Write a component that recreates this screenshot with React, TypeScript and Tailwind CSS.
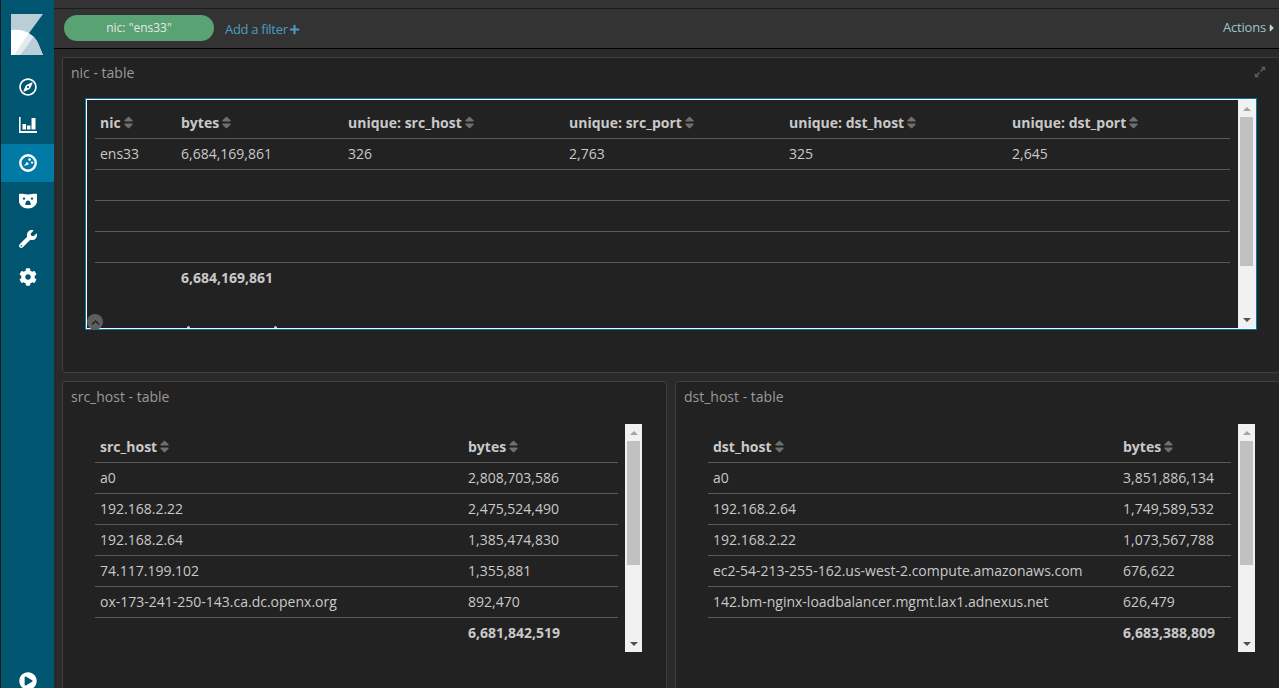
import React from "react";
import { FaRegCompass, FaWrench, FaCog, FaPlayCircle, FaPlus, FaCaretRight, FaSort, FaExpandAlt, FaChevronUp } from "react-icons/fa";

function Logo() {
  return (
    <svg width="32" height="41" viewBox="0 0 32 41" className="block">
      <polygon points="0,0 32,0 17,20.5 0,16" fill="#b9ced6" />
      <path d="M0,16 C10,15 20,17 26,28 L32,41 L0,41 Z" fill="#ffffff" />
      <path d="M9,41 L22.5,22.5 C24,24 26,26 28,31 L32,41 Z" fill="#b9ced6" />
      <path d="M3,41 L17.5,19.5 L22.5,22.5 L9,41 Z" fill="#e3ebee" />
    </svg>
  );
}

function BarIcon() {
  return (
    <svg width="18" height="16" viewBox="0 0 18 16">
      <path d="M0,0 H1.6 V14 H18 V16 H0 Z" fill="#fff" />
      <rect x="3.5" y="7" width="3.5" height="5.5" fill="#fff" />
      <rect x="8" y="8.5" width="3.5" height="4" fill="#fff" />
      <rect x="12.5" y="1" width="4" height="11.5" fill="#fff" />
    </svg>
  );
}

function DashIcon() {
  return (
    <svg width="18" height="18" viewBox="0 0 18 18">
      <circle cx="9" cy="9" r="7.7" fill="none" stroke="#fff" strokeWidth="2.4" />
      <circle cx="10.6" cy="5.6" r="1.3" fill="#fff" />
      <circle cx="13" cy="8.6" r="1.2" fill="#fff" />
      <path d="M5,12 L8,7.8 L10,10.2 Z" fill="#fff" />
    </svg>
  );
}

function BearIcon() {
  return (
    <svg width="18" height="16" viewBox="0 0 18 16">
      <path d="M0,1 C3,0.4 5,1.4 9,1.4 C13,1.4 15,0.4 18,1 L18,8 C18,12 14,15.5 9,15.5 C4,15.5 0,12 0,8 Z" fill="#fff" />
      <circle cx="5" cy="5.6" r="1.2" fill="#005571" />
      <circle cx="13" cy="5.6" r="1.2" fill="#005571" />
      <path d="M6.2,12 C6.2,8.8 7.6,7.4 9,7.4 C10.4,7.4 11.8,8.8 11.8,12 Z" fill="#005571" />
    </svg>
  );
}

function NavItem({ children, active }: { children: React.ReactNode; active?: boolean }) {
  return (
    <div className={`flex h-[38px] items-center justify-center text-white ${active ? "bg-[#0079a5]" : ""}`}>
      {children}
    </div>
  );
}

function Scrollbar({ thumb }: { thumb: string }) {
  return (
    <div className="flex h-full w-[17px] shrink-0 flex-col items-center bg-[#f1f1f1]">
      <div className="flex h-[17px] w-full shrink-0 items-center justify-center">
        <div className="h-0 w-0 border-x-[4px] border-b-[4px] border-x-transparent border-b-[#a3a3a3]" />
      </div>
      <div className={`w-[13px] shrink-0 bg-[#c1c1c1] ${thumb}`} />
      <div className="mt-auto flex h-[17px] w-full shrink-0 items-center justify-center">
        <div className="h-0 w-0 border-x-[4px] border-t-[4px] border-x-transparent border-t-[#505050]" />
      </div>
    </div>
  );
}

function Th({ label }: { label: string }) {
  return (
    <th className="border-b border-[#5a5a5a] px-[5px] text-left font-bold text-[#c9c9c9]">
      <span className="inline-flex items-center">
        {label}
        <FaSort className="text-[#6f6f6f]" size={15} />
      </span>
    </th>
  );
}

function Td({ children, bold }: { children?: React.ReactNode; bold?: boolean }) {
  return <td className={`px-[5px] text-[#c9c9c9] ${bold ? "font-bold" : ""}`}>{children}</td>;
}

function DataTable({ cols, head, rows, total }: { cols: string[]; head: string[]; rows: string[][]; total: string[] }) {
  return (
    <table className="table-fixed border-collapse text-[14px] leading-[20px]" style={{ width: cols.reduce((a, c) => a + parseInt(c), 0) }}>
      <colgroup>
        {cols.map((c, i) => (
          <col key={i} style={{ width: c }} />
        ))}
      </colgroup>
      <thead>
        <tr className="h-[30px]">
          {head.map((h) => (
            <Th key={h} label={h} />
          ))}
        </tr>
      </thead>
      <tbody>
        {rows.map((r, i) => (
          <tr key={i} className="h-[31px] border-b border-[#5a5a5a]">
            {head.map((_, j) => (
              <Td key={j}>{r[j]}</Td>
            ))}
          </tr>
        ))}
        <tr className="h-[31px]">
          {head.map((_, j) => (
            <Td key={j} bold>
              {total[j]}
            </Td>
          ))}
        </tr>
      </tbody>
    </table>
  );
}

function Panel({ title, className, children, expand }: { title: string; className: string; children: React.ReactNode; expand?: boolean }) {
  return (
    <section className={`flex flex-col rounded-[3px] border border-[#3f3f3f] bg-[#222222] ${className}`}>
      <header className="flex h-[28px] shrink-0 items-center justify-between pl-[8px] pr-[13px] text-[14px] text-[#9a9a9a]">
        <span>{title}</span>
        {expand && <FaExpandAlt className="text-[#5e5e5e]" size={12} />}
      </header>
      {children}
    </section>
  );
}

export default function App() {
  return (
    <div className="flex h-screen w-full overflow-hidden bg-[#2a2a2a] font-['Open_Sans',sans-serif]">
      <div className="w-px shrink-0 bg-[#1a1a1a]" />
      <nav className="flex w-[53px] shrink-0 flex-col overflow-hidden bg-[#005571]">
        <div className="flex h-[68px] shrink-0 justify-center pt-[14px] pr-[1px]">
          <Logo />
        </div>
        <NavItem><FaRegCompass size={18} /></NavItem>
        <NavItem><BarIcon /></NavItem>
        <NavItem active><DashIcon /></NavItem>
        <NavItem><BearIcon /></NavItem>
        <NavItem><FaWrench size={18} /></NavItem>
        <NavItem><FaCog size={18} /></NavItem>
        <div className="mt-auto mb-[-12px]">
          <NavItem><FaPlayCircle size={18} /></NavItem>
        </div>
      </nav>
      <main className="flex min-w-0 flex-1 flex-col">
        <div className="h-[8px] shrink-0 bg-[#333333]" />
        <div className="h-px shrink-0 bg-[#1c1c1c]" />
        <div className="flex h-[39px] shrink-0 items-center bg-[#333333] pb-[1px] pl-[10px] pr-[1px]">
          <div className="flex h-[26px] w-[150px] items-center justify-center rounded-full bg-[#58a273] text-[12px] text-[#e8e8e8]">
            nic: "ens33"
          </div>
          <div className="ml-[11px] mt-[3px] flex items-center gap-[1px] text-[13px] tracking-[-0.3px] text-[#4b9cc4]">
            Add a filter <FaPlus size={11} />
          </div>
          <div className="ml-auto flex items-center text-[13px] tracking-[-0.2px] text-[#9cc6cc]">
            Actions <FaCaretRight size={12} className="text-[#b8d8dc]" />
          </div>
        </div>
        <div className="h-px shrink-0 bg-black" />
        <div className="flex min-h-0 flex-1 flex-col gap-[8px] pl-[8px] pt-[8px]">
          <Panel title="nic - table" className="h-[316px] w-[1218px] shrink-0" expand>
            <div className="ml-[22px] mt-[12px] h-[232px] w-[1172px] border border-[#0079a5]">
              <div className="relative flex h-full border border-white border-r-0">
                <div className="min-w-0 flex-1 overflow-hidden pl-[8px] pt-[8px]">
                  <DataTable
                    cols={["81px", "167px", "221px", "220px", "223px", "223px"]}
                    head={["nic", "bytes", "unique: src_host", "unique: src_port", "unique: dst_host", "unique: dst_port"]}
                    rows={[["ens33", "6,684,169,861", "326", "2,763", "325", "2,645"], [], [], []]}
                    total={["", "6,684,169,861"]}
                  />
                </div>
                <Scrollbar thumb="h-[149px]" />
                <div className="w-px shrink-0 bg-[#f1f1f1]" />
                <div className="absolute bottom-[-2px] left-0 flex h-[16px] w-[16px] items-center justify-center rounded-full bg-[#5f5f5f] text-[#222222]">
                  <FaChevronUp size={9} />
                </div>
                <div className="absolute bottom-0 left-[100px] h-[2px] w-[3px] rounded-t-full bg-[#b9ced6]" />
                <div className="absolute bottom-0 left-[187px] h-[2px] w-[3px] rounded-t-full bg-[#b9ced6]" />
              </div>
            </div>
          </Panel>
          <div className="flex min-h-0 flex-1 gap-[8px]">
            <Panel title="src_host - table" className="h-[400px] w-[605px] shrink-0">
              <div className="ml-[23px] mt-[14px] flex h-[228px]">
                <div className="w-[539px] shrink-0 overflow-hidden pl-[9px] pt-[8px]">
                  <DataTable
                    cols={["368px", "155px"]}
                    head={["src_host", "bytes"]}
                    rows={[
                      ["a0", "2,808,703,586"],
                      ["192.168.2.22", "2,475,524,490"],
                      ["192.168.2.64", "1,385,474,830"],
                      ["74.117.199.102", "1,355,881"],
                      ["ox-173-241-250-143.ca.dc.openx.org", "892,470"],
                    ]}
                    total={["", "6,681,842,519"]}
                  />
                </div>
                <Scrollbar thumb="h-[124px]" />
              </div>
            </Panel>
            <Panel title="dst_host - table" className="h-[400px] w-[605px] shrink-0">
              <div className="ml-[23px] mt-[14px] flex h-[228px]">
                <div className="w-[539px] shrink-0 overflow-hidden pl-[9px] pt-[8px]">
                  <DataTable
                    cols={["410px", "113px"]}
                    head={["dst_host", "bytes"]}
                    rows={[
                      ["a0", "3,851,886,134"],
                      ["192.168.2.64", "1,749,589,532"],
                      ["192.168.2.22", "1,073,567,788"],
                      ["ec2-54-213-255-162.us-west-2.compute.amazonaws.com", "676,622"],
                      ["142.bm-nginx-loadbalancer.mgmt.lax1.adnexus.net", "626,479"],
                    ]}
                    total={["", "6,683,388,809"]}
                  />
                </div>
                <Scrollbar thumb="h-[124px]" />
              </div>
            </Panel>
          </div>
        </div>
      </main>
    </div>
  );
}
